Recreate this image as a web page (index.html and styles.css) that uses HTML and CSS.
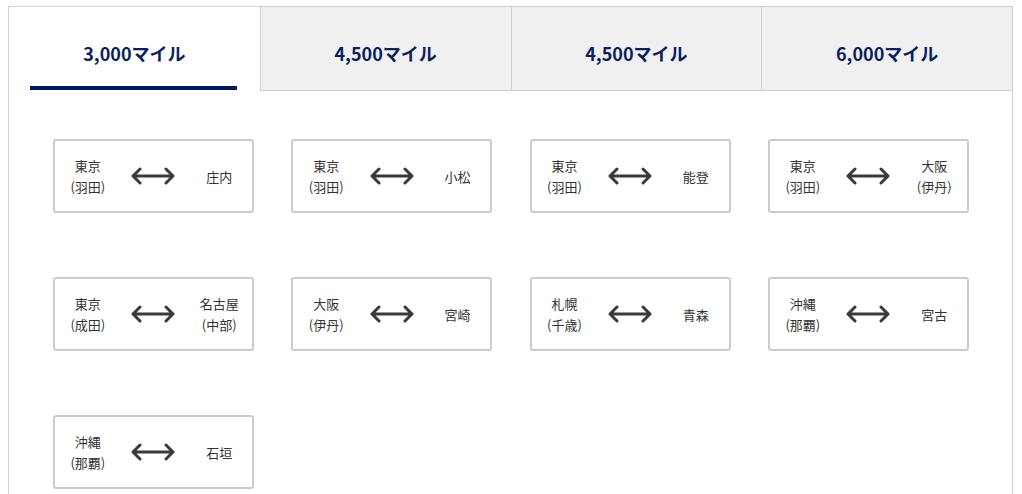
FILE: index.html
```html
<!DOCTYPE html>
<html lang="ja">
<head>
<meta charset="utf-8">
<link rel="stylesheet" href="styles.css">
</head>
<body>
<div class="panel">
  <div class="tabs">
    <div class="tab active">3,000マイル</div>
    <div class="tab">4,500マイル</div>
    <div class="tab">4,500マイル</div>
    <div class="tab">6,000マイル</div>
  </div>
  <div class="routes">
    <div class="card"><div class="city">東京<br>(羽田)</div><div class="arrow"><svg viewBox="0 0 44 18" width="44" height="18"><path d="M3 9H41M9 2L2 9L9 16M35 2L42 9L35 16" fill="none" stroke="#3a3a3a" stroke-width="3" stroke-linecap="round" stroke-linejoin="round"/></svg></div><div class="city">庄内</div></div>
    <div class="card"><div class="city">東京<br>(羽田)</div><div class="arrow"><svg viewBox="0 0 44 18" width="44" height="18"><path d="M3 9H41M9 2L2 9L9 16M35 2L42 9L35 16" fill="none" stroke="#3a3a3a" stroke-width="3" stroke-linecap="round" stroke-linejoin="round"/></svg></div><div class="city">小松</div></div>
    <div class="card"><div class="city">東京<br>(羽田)</div><div class="arrow"><svg viewBox="0 0 44 18" width="44" height="18"><path d="M3 9H41M9 2L2 9L9 16M35 2L42 9L35 16" fill="none" stroke="#3a3a3a" stroke-width="3" stroke-linecap="round" stroke-linejoin="round"/></svg></div><div class="city">能登</div></div>
    <div class="card"><div class="city">東京<br>(羽田)</div><div class="arrow"><svg viewBox="0 0 44 18" width="44" height="18"><path d="M3 9H41M9 2L2 9L9 16M35 2L42 9L35 16" fill="none" stroke="#3a3a3a" stroke-width="3" stroke-linecap="round" stroke-linejoin="round"/></svg></div><div class="city">大阪<br>(伊丹)</div></div>
    <div class="card"><div class="city">東京<br>(成田)</div><div class="arrow"><svg viewBox="0 0 44 18" width="44" height="18"><path d="M3 9H41M9 2L2 9L9 16M35 2L42 9L35 16" fill="none" stroke="#3a3a3a" stroke-width="3" stroke-linecap="round" stroke-linejoin="round"/></svg></div><div class="city">名古屋<br>(中部)</div></div>
    <div class="card"><div class="city">大阪<br>(伊丹)</div><div class="arrow"><svg viewBox="0 0 44 18" width="44" height="18"><path d="M3 9H41M9 2L2 9L9 16M35 2L42 9L35 16" fill="none" stroke="#3a3a3a" stroke-width="3" stroke-linecap="round" stroke-linejoin="round"/></svg></div><div class="city">宮崎</div></div>
    <div class="card"><div class="city">札幌<br>(千歳)</div><div class="arrow"><svg viewBox="0 0 44 18" width="44" height="18"><path d="M3 9H41M9 2L2 9L9 16M35 2L42 9L35 16" fill="none" stroke="#3a3a3a" stroke-width="3" stroke-linecap="round" stroke-linejoin="round"/></svg></div><div class="city">青森</div></div>
    <div class="card"><div class="city">沖縄<br>(那覇)</div><div class="arrow"><svg viewBox="0 0 44 18" width="44" height="18"><path d="M3 9H41M9 2L2 9L9 16M35 2L42 9L35 16" fill="none" stroke="#3a3a3a" stroke-width="3" stroke-linecap="round" stroke-linejoin="round"/></svg></div><div class="city">宮古</div></div>
    <div class="card"><div class="city">沖縄<br>(那覇)</div><div class="arrow"><svg viewBox="0 0 44 18" width="44" height="18"><path d="M3 9H41M9 2L2 9L9 16M35 2L42 9L35 16" fill="none" stroke="#3a3a3a" stroke-width="3" stroke-linecap="round" stroke-linejoin="round"/></svg></div><div class="city">石垣</div></div>
  </div>
</div>
</body>
</html>
```
FILE: styles.css
```css
html, body {
  margin: 0;
  padding: 0;
  background: #fff;
}
body {
  padding: 6px 9px 0 8px;
  font-family: "Noto Sans CJK JP", "Noto Sans", sans-serif;
  color: #333;
}
.panel {
  border: 1px solid #cfcfcf;
  border-bottom: none;
  min-height: 500px;
}
.tabs {
  display: grid;
  grid-template-columns: repeat(4, 1fr);
}
.tab {
  height: 84px;
  display: flex;
  align-items: center;
  justify-content: center;
  padding-top: 8px;
  box-sizing: border-box;
  background: #f0f0f0;
  border-left: 1px solid #cfcfcf;
  border-bottom: 1px solid #cfcfcf;
  font-size: 18px;
  font-weight: 700;
  color: #0b1f5e;
  position: relative;
}
.tab:first-child {
  border-left: none;
}
.tab.active {
  background: #fff;
  border-bottom-color: transparent;
}
.tab.active::after {
  content: "";
  position: absolute;
  left: 21px;
  right: 23px;
  bottom: 0;
  height: 4px;
  background: #00176b;
}
.routes {
  display: grid;
  grid-template-columns: repeat(4, 201px);
  justify-content: space-between;
  row-gap: 64px;
  padding: 48px 43px 0 44px;
}
.card {
  height: 74px;
  box-sizing: border-box;
  border: 2px solid #cccccc;
  border-radius: 3px;
  display: grid;
  grid-template-columns: 1fr 1fr 1fr;
  align-items: center;
}
.city {
  text-align: center;
  font-size: 13px;
  line-height: 21px;
  color: #333;
}
.arrow {
  display: flex;
  justify-content: center;
  align-items: center;
}
.arrow svg {
  display: block;
}
```
